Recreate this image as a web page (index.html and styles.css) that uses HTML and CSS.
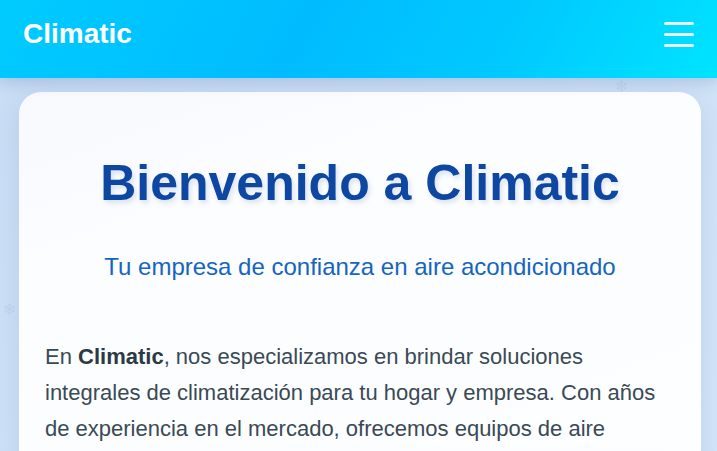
FILE: index.html
```html
<!DOCTYPE html>
<html lang="es">
<head>
<meta charset="utf-8">
<title>Climatic</title>
<link rel="stylesheet" href="styles.css">
</head>
<body>
<header class="topbar">
  <div class="logo">Climatic</div>
  <button class="menu" aria-label="Menú">
    <span class="bar"></span><span class="bar"></span><span class="bar"></span>
  </button>
</header>
<span class="flake flake-a">❄</span>
<span class="flake flake-b">❄</span>
<main class="page">
  <section class="card">
    <h1 class="title">Bienvenido a Climatic</h1>
    <p class="subtitle">Tu empresa de confianza en aire acondicionado</p>
    <p class="text">En <strong>Climatic</strong>, nos especializamos en brindar soluciones integrales de climatización para tu hogar y empresa. Con años de experiencia en el mercado, ofrecemos equipos de aire acondicionado de las mejores marcas, instalación profesional y un servicio técnico de calidad.</p>
  </section>
</main>
</body>
</html>
```
FILE: styles.css
```css
* { box-sizing: border-box; }
html, body { margin: 0; padding: 0; }
body {
  font-family: "Liberation Sans", Arial, sans-serif;
  background: linear-gradient(135deg, #c9ddf4 0%, #cfe2f7 50%, #d3e5f8 100%);
  height: 451px;
  overflow: hidden;
  position: relative;
}
.topbar {
  position: relative;
  z-index: 2;
  height: 78px;
  display: flex;
  align-items: center;
  justify-content: space-between;
  padding: 0 23px 10px 23px;
  background: linear-gradient(120deg, #00cbff 0%, #00bcff 42%, #00c9ff 70%, #00e3ff 100%);
  box-shadow: 0 4px 14px rgba(40, 80, 150, 0.22);
}
.logo {
  color: #ffffff;
  font-weight: 700;
  font-size: 28px;
  line-height: 32px;
}
.menu {
  background: none;
  border: 0;
  padding: 0;
  width: 30px;
  display: flex;
  flex-direction: column;
  gap: 8px;
  cursor: pointer;
}
.bar {
  display: block;
  width: 30px;
  height: 3px;
  border-radius: 2px;
  background: #e9f3fc;
}
.flake {
  position: absolute;
  z-index: 0;
  color: rgba(150, 180, 220, 0.25);
  font-family: "DejaVu Sans", sans-serif;
  font-size: 16px;
  line-height: 1;
}
.flake-a { left: 615px; top: 79px; }
.flake-b { left: 3px; top: 302px; }
.page {
  position: relative;
  z-index: 1;
  padding: 14px 16px 0 19px;
}
.card {
  background: linear-gradient(160deg, #f7f9fd 0%, #fcfdff 30%, #fdfeff 100%);
  border-radius: 22px;
  box-shadow: 0 6px 24px rgba(60, 100, 170, 0.15);
  padding: 63px 26px 30px 26px;
  min-height: 400px;
}
.title {
  margin: 0;
  text-align: center;
  color: #0d47a1;
  font-size: 50px;
  line-height: 57px;
  font-weight: 700;
  text-shadow: 2px 3px 5px rgba(13, 71, 161, 0.15);
}
.subtitle {
  margin: 41px 0 0 0;
  text-align: center;
  color: #1565c0;
  font-size: 24px;
  line-height: 28px;
}
.text {
  margin: 58px 0 0 0;
  color: #3a4a55;
  font-size: 22px;
  line-height: 36px;
}
.text strong { color: #2c3a44; }
```
